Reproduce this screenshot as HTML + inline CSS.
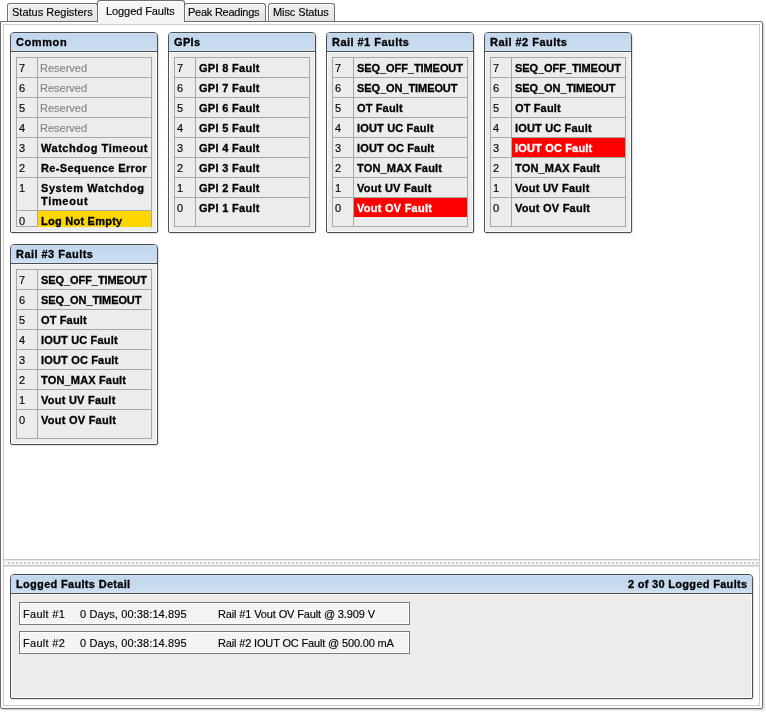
<!DOCTYPE html>
<html><head><meta charset="utf-8"><style>
html,body{margin:0;padding:0;background:#fff;width:766px;height:712px;overflow:hidden;position:relative;font-family:"Liberation Sans", sans-serif;font-size:11px;color:#000}
div{position:absolute;box-sizing:content-box}
.t{line-height:11px;white-space:nowrap;z-index:5;will-change:transform;-webkit-text-stroke:0.15px currentColor}
.b{font-weight:bold;-webkit-text-stroke:0.3px currentColor}
.res{color:#858585}
.wt{color:#fff}
.panel{left:0;top:21px;width:761px;height:686px;border:1px solid #6e6e6e;border-radius:0 2px 2px 2px;background:#fff;box-shadow:1px 1px 0 #d6d6d6,2px 2px 0 #eeeeee}
.panel-in{left:3px;top:24px;width:755px;height:680px;border:1px solid #cbcbcb}
.tab{border:1px solid #707070;border-bottom:none;border-radius:3px 3px 0 0;background:linear-gradient(#f2f2f2,#e3e3e3);box-shadow:inset 1px 1px 0 #fff}
.tab.sel{background:#f5f5f5;z-index:2}
.box{border:1px solid #4e4e4e;border-radius:4px 4px 2px 2px;background:#ececec;box-shadow:1px 1px 1px rgba(0,0,0,.12), inset 1px 1px 0 #fff, inset -1px -1px 0 #fff;overflow:hidden}
.hdr{left:0;top:0;right:0;height:18px;border-bottom:1px solid #4e4e4e;box-shadow:0 1px 0 #f8f8f8;background:linear-gradient(#c9def1 0px,#c2d7ec 2px,#cbdef0 16px,#d3e6f6 18px);}
.tbl{border:1px solid #aca899}
.vdiv{width:1px;background:#aca899}
.hdiv{height:1px;background:#aca899}
.fill.red{background:#ff0000}
.fill.yellow{background:#ffd700}
.split{left:4px;top:559px;width:755px;height:5px;border-top:1px solid #c6c6c6;border-bottom:1px solid #c6c6c6;background:#fafafa;box-shadow:inset 0 1px 0 #e8e8e8, 0 1px 0 #e0e0e0}
.dots{left:8px;top:562px;width:750px;height:2px;background:repeating-linear-gradient(90deg,#c8c8c8 0 2px,transparent 2px 4px)}
.item{left:19px;width:389px;height:21px;border:1px solid #7a7a7a;background:#f4f4f4;box-shadow:inset 1px 1px 0 #fff, inset -1px -1px 0 #fff}
</style></head>
<body>
<div class="panel"></div><div class="panel-in"></div>
<div class="tab" style="left:7px;top:3px;width:89px;height:17px"></div><div class="t tt" style="left:12px;top:7px;">Status Registers</div>
<div class="tab" style="left:184px;top:3px;width:80px;height:17px"></div><div class="t tt" style="left:188px;top:7px;letter-spacing:-0.25px;">Peak Readings</div>
<div class="tab" style="left:268px;top:3px;width:65px;height:17px"></div><div class="t tt" style="left:273px;top:7px;letter-spacing:-0.1px;">Misc Status</div>
<div class="tab sel" style="left:97px;top:0px;width:86px;height:21px"></div><div class="t tt" style="left:106px;top:6px;letter-spacing:-0.083px;">Logged Faults</div>
<div style="left:98px;top:21px;width:86px;height:3px;background:#f4f4f4;z-index:3"></div>
<div class="box" style="left:10px;top:32px;width:146px;height:199px"><div class="hdr"></div></div>
<div class="t b" style="left:16px;top:37px;letter-spacing:0.6px;">Common</div>
<div class="tbl" style="left:16px;top:57px;width:134px;height:168px"></div>
<div class="vdiv" style="left:37px;top:57px;height:170px"></div>
<div class="t " style="left:19px;top:63px;">7</div>
<div class="t res" style="left:40px;top:63px;">Reserved</div>
<div class="hdiv" style="left:16px;top:77px;width:136px"></div>
<div class="t " style="left:19px;top:83px;">6</div>
<div class="t res" style="left:40px;top:83px;">Reserved</div>
<div class="hdiv" style="left:16px;top:97px;width:136px"></div>
<div class="t " style="left:19px;top:103px;">5</div>
<div class="t res" style="left:40px;top:103px;">Reserved</div>
<div class="hdiv" style="left:16px;top:117px;width:136px"></div>
<div class="t " style="left:19px;top:123px;">4</div>
<div class="t res" style="left:40px;top:123px;">Reserved</div>
<div class="hdiv" style="left:16px;top:137px;width:136px"></div>
<div class="t " style="left:19px;top:143px;">3</div>
<div class="t b" style="left:41px;top:143px;letter-spacing:0.533px;">Watchdog Timeout</div>
<div class="hdiv" style="left:16px;top:157px;width:136px"></div>
<div class="t " style="left:19px;top:163px;">2</div>
<div class="t b" style="left:41px;top:163px;letter-spacing:0.375px;">Re-Sequence Error</div>
<div class="hdiv" style="left:16px;top:177px;width:136px"></div>
<div class="t " style="left:19px;top:183px;">1</div>
<div class="t b" style="left:41px;top:183px;letter-spacing:0.571px;">System Watchdog</div>
<div class="t b" style="left:41px;top:196px;letter-spacing:0.667px;">Timeout</div>
<div class="hdiv" style="left:16px;top:210px;width:136px"></div>
<div class="fill yellow" style="left:38px;top:211px;width:113px;height:16px"></div>
<div class="t " style="left:19px;top:216px;">0</div>
<div class="t b" style="left:41px;top:216px;letter-spacing:0.25px;">Log Not Empty</div>
<div class="box" style="left:168px;top:32px;width:146px;height:199px"><div class="hdr"></div></div>
<div class="t b" style="left:174px;top:37px;letter-spacing:0.333px;">GPIs</div>
<div class="tbl" style="left:174px;top:57px;width:134px;height:168px"></div>
<div class="vdiv" style="left:195px;top:57px;height:170px"></div>
<div class="t " style="left:177px;top:63px;">7</div>
<div class="t b" style="left:199px;top:63px;letter-spacing:0.3px;">GPI 8 Fault</div>
<div class="hdiv" style="left:174px;top:77px;width:136px"></div>
<div class="t " style="left:177px;top:83px;">6</div>
<div class="t b" style="left:199px;top:83px;letter-spacing:0.3px;">GPI 7 Fault</div>
<div class="hdiv" style="left:174px;top:97px;width:136px"></div>
<div class="t " style="left:177px;top:103px;">5</div>
<div class="t b" style="left:199px;top:103px;letter-spacing:0.3px;">GPI 6 Fault</div>
<div class="hdiv" style="left:174px;top:117px;width:136px"></div>
<div class="t " style="left:177px;top:123px;">4</div>
<div class="t b" style="left:199px;top:123px;letter-spacing:0.3px;">GPI 5 Fault</div>
<div class="hdiv" style="left:174px;top:137px;width:136px"></div>
<div class="t " style="left:177px;top:143px;">3</div>
<div class="t b" style="left:199px;top:143px;letter-spacing:0.3px;">GPI 4 Fault</div>
<div class="hdiv" style="left:174px;top:157px;width:136px"></div>
<div class="t " style="left:177px;top:163px;">2</div>
<div class="t b" style="left:199px;top:163px;letter-spacing:0.3px;">GPI 3 Fault</div>
<div class="hdiv" style="left:174px;top:177px;width:136px"></div>
<div class="t " style="left:177px;top:183px;">1</div>
<div class="t b" style="left:199px;top:183px;letter-spacing:0.3px;">GPI 2 Fault</div>
<div class="hdiv" style="left:174px;top:197px;width:136px"></div>
<div class="t " style="left:177px;top:203px;">0</div>
<div class="t b" style="left:199px;top:203px;letter-spacing:0.3px;">GPI 1 Fault</div>
<div class="box" style="left:326px;top:32px;width:146px;height:199px"><div class="hdr"></div></div>
<div class="t b" style="left:332px;top:37px;letter-spacing:0.462px;">Rail #1 Faults</div>
<div class="tbl" style="left:332px;top:57px;width:134px;height:168px"></div>
<div class="vdiv" style="left:353px;top:57px;height:170px"></div>
<div class="t " style="left:335px;top:63px;">7</div>
<div class="t b" style="left:357px;top:63px;letter-spacing:-0.071px;">SEQ_OFF_TIMEOUT</div>
<div class="hdiv" style="left:332px;top:77px;width:136px"></div>
<div class="t " style="left:335px;top:83px;">6</div>
<div class="t b" style="left:357px;top:83px;letter-spacing:-0.077px;">SEQ_ON_TIMEOUT</div>
<div class="hdiv" style="left:332px;top:97px;width:136px"></div>
<div class="t " style="left:335px;top:103px;">5</div>
<div class="t b" style="left:357px;top:103px;letter-spacing:0.143px;">OT Fault</div>
<div class="hdiv" style="left:332px;top:117px;width:136px"></div>
<div class="t " style="left:335px;top:123px;">4</div>
<div class="t b" style="left:357px;top:123px;letter-spacing:0.167px;">IOUT UC Fault</div>
<div class="hdiv" style="left:332px;top:137px;width:136px"></div>
<div class="t " style="left:335px;top:143px;">3</div>
<div class="t b" style="left:357px;top:143px;letter-spacing:0.167px;">IOUT OC Fault</div>
<div class="hdiv" style="left:332px;top:157px;width:136px"></div>
<div class="t " style="left:335px;top:163px;">2</div>
<div class="t b" style="left:357px;top:163px;letter-spacing:0.167px;">TON_MAX Fault</div>
<div class="hdiv" style="left:332px;top:177px;width:136px"></div>
<div class="t " style="left:335px;top:183px;">1</div>
<div class="t b" style="left:357px;top:183px;letter-spacing:0.25px;">Vout UV Fault</div>
<div class="hdiv" style="left:332px;top:197px;width:136px"></div>
<div class="fill red" style="left:354px;top:198px;width:113px;height:19px"></div>
<div class="t " style="left:335px;top:203px;">0</div>
<div class="t b wt" style="left:357px;top:203px;letter-spacing:0.25px;">Vout OV Fault</div>
<div class="box" style="left:484px;top:32px;width:146px;height:199px"><div class="hdr"></div></div>
<div class="t b" style="left:490px;top:37px;letter-spacing:0.462px;">Rail #2 Faults</div>
<div class="tbl" style="left:490px;top:57px;width:134px;height:168px"></div>
<div class="vdiv" style="left:511px;top:57px;height:170px"></div>
<div class="t " style="left:493px;top:63px;">7</div>
<div class="t b" style="left:515px;top:63px;letter-spacing:-0.071px;">SEQ_OFF_TIMEOUT</div>
<div class="hdiv" style="left:490px;top:77px;width:136px"></div>
<div class="t " style="left:493px;top:83px;">6</div>
<div class="t b" style="left:515px;top:83px;letter-spacing:-0.077px;">SEQ_ON_TIMEOUT</div>
<div class="hdiv" style="left:490px;top:97px;width:136px"></div>
<div class="t " style="left:493px;top:103px;">5</div>
<div class="t b" style="left:515px;top:103px;letter-spacing:0.143px;">OT Fault</div>
<div class="hdiv" style="left:490px;top:117px;width:136px"></div>
<div class="t " style="left:493px;top:123px;">4</div>
<div class="t b" style="left:515px;top:123px;letter-spacing:0.167px;">IOUT UC Fault</div>
<div class="hdiv" style="left:490px;top:137px;width:136px"></div>
<div class="fill red" style="left:512px;top:138px;width:113px;height:19px"></div>
<div class="t " style="left:493px;top:143px;">3</div>
<div class="t b wt" style="left:515px;top:143px;letter-spacing:0.167px;">IOUT OC Fault</div>
<div class="hdiv" style="left:490px;top:157px;width:136px"></div>
<div class="t " style="left:493px;top:163px;">2</div>
<div class="t b" style="left:515px;top:163px;letter-spacing:0.167px;">TON_MAX Fault</div>
<div class="hdiv" style="left:490px;top:177px;width:136px"></div>
<div class="t " style="left:493px;top:183px;">1</div>
<div class="t b" style="left:515px;top:183px;letter-spacing:0.25px;">Vout UV Fault</div>
<div class="hdiv" style="left:490px;top:197px;width:136px"></div>
<div class="t " style="left:493px;top:203px;">0</div>
<div class="t b" style="left:515px;top:203px;letter-spacing:0.25px;">Vout OV Fault</div>
<div class="box" style="left:10px;top:244px;width:146px;height:199px"><div class="hdr"></div></div>
<div class="t b" style="left:16px;top:249px;letter-spacing:0.462px;">Rail #3 Faults</div>
<div class="tbl" style="left:16px;top:269px;width:134px;height:168px"></div>
<div class="vdiv" style="left:37px;top:269px;height:170px"></div>
<div class="t " style="left:19px;top:275px;">7</div>
<div class="t b" style="left:41px;top:275px;letter-spacing:-0.071px;">SEQ_OFF_TIMEOUT</div>
<div class="hdiv" style="left:16px;top:289px;width:136px"></div>
<div class="t " style="left:19px;top:295px;">6</div>
<div class="t b" style="left:41px;top:295px;letter-spacing:-0.077px;">SEQ_ON_TIMEOUT</div>
<div class="hdiv" style="left:16px;top:309px;width:136px"></div>
<div class="t " style="left:19px;top:315px;">5</div>
<div class="t b" style="left:41px;top:315px;letter-spacing:0.143px;">OT Fault</div>
<div class="hdiv" style="left:16px;top:329px;width:136px"></div>
<div class="t " style="left:19px;top:335px;">4</div>
<div class="t b" style="left:41px;top:335px;letter-spacing:0.167px;">IOUT UC Fault</div>
<div class="hdiv" style="left:16px;top:349px;width:136px"></div>
<div class="t " style="left:19px;top:355px;">3</div>
<div class="t b" style="left:41px;top:355px;letter-spacing:0.167px;">IOUT OC Fault</div>
<div class="hdiv" style="left:16px;top:369px;width:136px"></div>
<div class="t " style="left:19px;top:375px;">2</div>
<div class="t b" style="left:41px;top:375px;letter-spacing:0.167px;">TON_MAX Fault</div>
<div class="hdiv" style="left:16px;top:389px;width:136px"></div>
<div class="t " style="left:19px;top:395px;">1</div>
<div class="t b" style="left:41px;top:395px;letter-spacing:0.25px;">Vout UV Fault</div>
<div class="hdiv" style="left:16px;top:409px;width:136px"></div>
<div class="t " style="left:19px;top:415px;">0</div>
<div class="t b" style="left:41px;top:415px;letter-spacing:0.25px;">Vout OV Fault</div>
<div class="split"></div><div class="dots"></div>
<div class="box" style="left:10px;top:574px;width:741px;height:123px"><div class="hdr"></div></div>
<div class="t b" style="left:16px;top:579px;letter-spacing:0.316px;">Logged Faults Detail</div>
<div class="t b" style="left:628px;top:579px;letter-spacing:0.3px;">2 of 30 Logged Faults</div>
<div class="item" style="top:602px"></div>
<div class="t " style="left:23px;top:609px;letter-spacing:0.286px;">Fault #1</div>
<div class="t " style="left:80px;top:609px;letter-spacing:0.105px;">0 Days, 00:38:14.895</div>
<div class="t " style="left:218px;top:609px;letter-spacing:-0.133px;">Rail #1 Vout OV Fault @ 3.909 V</div>
<div class="item" style="top:631px"></div>
<div class="t " style="left:23px;top:638px;letter-spacing:0.286px;">Fault #2</div>
<div class="t " style="left:80px;top:638px;letter-spacing:0.105px;">0 Days, 00:38:14.895</div>
<div class="t " style="left:218px;top:638px;letter-spacing:-0.156px;">Rail #2 IOUT OC Fault @ 500.00 mA</div>
</body></html>
